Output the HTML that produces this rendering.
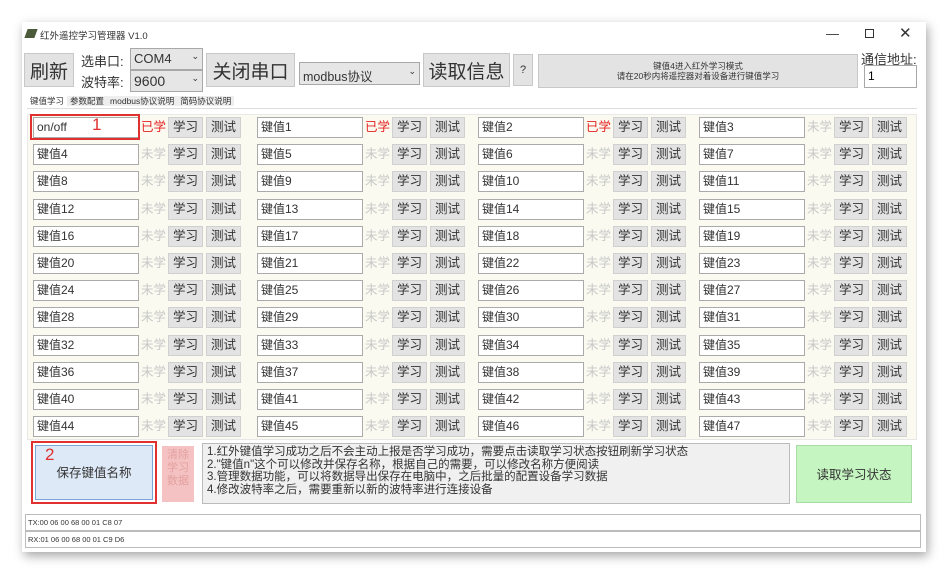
<!DOCTYPE html><html><head><meta charset="utf-8"><style>
body{margin:0;width:950px;height:570px;background:#fff;position:relative;overflow:hidden;font-family:"Liberation Sans","Noto Sans CJK SC",sans-serif;}
.a{position:absolute;box-sizing:border-box}
.win{left:22px;top:22px;width:904px;height:530px;background:#fff;box-shadow:2px 4px 10px rgba(0,0,0,.35)}
.btn{background:#e3e3e3;border:1px solid #c8c8c8;color:#333;display:flex;align-items:center;justify-content:center}
.box{background:#fff;border:1px solid #a8a8a8}
.row{position:absolute;left:33px;height:21px;display:flex;font-size:12px}
.g{display:flex;width:221px}
.g:first-child{width:224px}
.g .i{width:106px;height:21px;box-sizing:border-box;border:1px solid #aaa;background:#fff;padding:0 3px;line-height:19px;color:#333}
.g .s{width:29px;text-align:center;line-height:21px;color:#c8c8c8;font-size:12.5px}
.g .s.r{color:#e62020}
.g .b{width:35px;height:21px;box-sizing:border-box;background:#e3e3e3;border:1px solid #d0d0d0;margin-right:3px;text-align:center;line-height:19px;color:#333;font-size:12.5px}
.g.last{width:auto}
</style></head><body>
<div class="a win"></div>
<div class="a" style="left:26px;top:29px;width:10px;height:9px;background:#4a5a3a;transform:skew(-20deg)"></div>
<div class="a" style="left:40px;top:28px;font-size:9.5px;color:#333">红外遥控学习管理器 V1.0</div>
<div class="a" style="left:826px;top:26px;font-size:13px;color:#333">—</div>
<div class="a" style="left:865px;top:29px;width:9px;height:9px;border:1px solid #333"></div>
<div class="a" style="left:899px;top:24px;font-size:15px;color:#333">✕</div>

<div class="a btn" style="left:24px;top:53px;width:50px;height:34px;font-size:19px">刷新</div>
<div class="a" style="left:81px;top:51px;font-size:13px;color:#333;line-height:21px">选串口:<br>波特率:</div>
<div class="a box" style="left:130px;top:48px;width:73px;height:22px;background:#e6e6e6;font-size:13px;padding:2px 3px;color:#333">COM4<span style="float:right;font-size:9px">⌄</span></div>
<div class="a box" style="left:130px;top:70px;width:73px;height:22px;background:#e6e6e6;font-size:14px;padding:2px 3px;color:#333">9600<span style="float:right;font-size:9px">⌄</span></div>
<div class="a btn" style="left:206px;top:53px;width:89px;height:34px;font-size:19px">关闭串口</div>
<div class="a box" style="left:299px;top:62px;width:121px;height:23px;background:#e6e6e6;font-size:12.5px;padding:3px 3px;color:#333">modbus协议<span style="float:right;font-size:9px">⌄</span></div>
<div class="a btn" style="left:423px;top:53px;width:87px;height:34px;font-size:19px">读取信息</div>
<div class="a btn" style="left:513px;top:54px;width:20px;height:32px;font-size:11px">?</div>
<div class="a btn" style="left:538px;top:54px;width:320px;height:34px;font-size:8.5px;line-height:10px;text-align:center;flex-direction:column">键值4进入红外学习模式<br>请在20秒内将遥控器对着设备进行键值学习</div>
<div class="a" style="left:861px;top:49px;font-size:13px;color:#333">通信地址:</div>
<div class="a box" style="left:864px;top:65px;width:53px;height:23px;font-size:12px;padding:3px 3px">1</div>

<div class="a" style="left:27px;top:94px;font-size:8.5px;color:#333;height:15px;line-height:15px;width:890px;border-bottom:1px solid #ddd">
<span style="background:#fff;padding:0 3px">键值学习</span><span style="background:#eee;padding:0 3px">参数配置</span><span style="background:#eee;padding:0 3px">modbus协议说明</span><span style="background:#eee;padding:0 3px">简码协议说明</span></div>
<div class="a" style="left:27px;top:114px;width:890px;height:326px;background:#fafaf0;border:1px solid #e8e8e8"></div>

<div class="row" style="top:117px"><div class="g"><div class="i">on/off</div><div class="s r">已学</div><div class="b">学习</div><div class="b">测试</div></div><div class="g"><div class="i">键值1</div><div class="s r">已学</div><div class="b">学习</div><div class="b">测试</div></div><div class="g"><div class="i">键值2</div><div class="s r">已学</div><div class="b">学习</div><div class="b">测试</div></div><div class="g last"><div class="i">键值3</div><div class="s">未学</div><div class="b">学习</div><div class="b">测试</div></div></div>
<div class="row" style="top:144px"><div class="g"><div class="i">键值4</div><div class="s">未学</div><div class="b">学习</div><div class="b">测试</div></div><div class="g"><div class="i">键值5</div><div class="s">未学</div><div class="b">学习</div><div class="b">测试</div></div><div class="g"><div class="i">键值6</div><div class="s">未学</div><div class="b">学习</div><div class="b">测试</div></div><div class="g last"><div class="i">键值7</div><div class="s">未学</div><div class="b">学习</div><div class="b">测试</div></div></div>
<div class="row" style="top:171px"><div class="g"><div class="i">键值8</div><div class="s">未学</div><div class="b">学习</div><div class="b">测试</div></div><div class="g"><div class="i">键值9</div><div class="s">未学</div><div class="b">学习</div><div class="b">测试</div></div><div class="g"><div class="i">键值10</div><div class="s">未学</div><div class="b">学习</div><div class="b">测试</div></div><div class="g last"><div class="i">键值11</div><div class="s">未学</div><div class="b">学习</div><div class="b">测试</div></div></div>
<div class="row" style="top:199px"><div class="g"><div class="i">键值12</div><div class="s">未学</div><div class="b">学习</div><div class="b">测试</div></div><div class="g"><div class="i">键值13</div><div class="s">未学</div><div class="b">学习</div><div class="b">测试</div></div><div class="g"><div class="i">键值14</div><div class="s">未学</div><div class="b">学习</div><div class="b">测试</div></div><div class="g last"><div class="i">键值15</div><div class="s">未学</div><div class="b">学习</div><div class="b">测试</div></div></div>
<div class="row" style="top:226px"><div class="g"><div class="i">键值16</div><div class="s">未学</div><div class="b">学习</div><div class="b">测试</div></div><div class="g"><div class="i">键值17</div><div class="s">未学</div><div class="b">学习</div><div class="b">测试</div></div><div class="g"><div class="i">键值18</div><div class="s">未学</div><div class="b">学习</div><div class="b">测试</div></div><div class="g last"><div class="i">键值19</div><div class="s">未学</div><div class="b">学习</div><div class="b">测试</div></div></div>
<div class="row" style="top:253px"><div class="g"><div class="i">键值20</div><div class="s">未学</div><div class="b">学习</div><div class="b">测试</div></div><div class="g"><div class="i">键值21</div><div class="s">未学</div><div class="b">学习</div><div class="b">测试</div></div><div class="g"><div class="i">键值22</div><div class="s">未学</div><div class="b">学习</div><div class="b">测试</div></div><div class="g last"><div class="i">键值23</div><div class="s">未学</div><div class="b">学习</div><div class="b">测试</div></div></div>
<div class="row" style="top:280px"><div class="g"><div class="i">键值24</div><div class="s">未学</div><div class="b">学习</div><div class="b">测试</div></div><div class="g"><div class="i">键值25</div><div class="s">未学</div><div class="b">学习</div><div class="b">测试</div></div><div class="g"><div class="i">键值26</div><div class="s">未学</div><div class="b">学习</div><div class="b">测试</div></div><div class="g last"><div class="i">键值27</div><div class="s">未学</div><div class="b">学习</div><div class="b">测试</div></div></div>
<div class="row" style="top:307px"><div class="g"><div class="i">键值28</div><div class="s">未学</div><div class="b">学习</div><div class="b">测试</div></div><div class="g"><div class="i">键值29</div><div class="s">未学</div><div class="b">学习</div><div class="b">测试</div></div><div class="g"><div class="i">键值30</div><div class="s">未学</div><div class="b">学习</div><div class="b">测试</div></div><div class="g last"><div class="i">键值31</div><div class="s">未学</div><div class="b">学习</div><div class="b">测试</div></div></div>
<div class="row" style="top:335px"><div class="g"><div class="i">键值32</div><div class="s">未学</div><div class="b">学习</div><div class="b">测试</div></div><div class="g"><div class="i">键值33</div><div class="s">未学</div><div class="b">学习</div><div class="b">测试</div></div><div class="g"><div class="i">键值34</div><div class="s">未学</div><div class="b">学习</div><div class="b">测试</div></div><div class="g last"><div class="i">键值35</div><div class="s">未学</div><div class="b">学习</div><div class="b">测试</div></div></div>
<div class="row" style="top:362px"><div class="g"><div class="i">键值36</div><div class="s">未学</div><div class="b">学习</div><div class="b">测试</div></div><div class="g"><div class="i">键值37</div><div class="s">未学</div><div class="b">学习</div><div class="b">测试</div></div><div class="g"><div class="i">键值38</div><div class="s">未学</div><div class="b">学习</div><div class="b">测试</div></div><div class="g last"><div class="i">键值39</div><div class="s">未学</div><div class="b">学习</div><div class="b">测试</div></div></div>
<div class="row" style="top:389px"><div class="g"><div class="i">键值40</div><div class="s">未学</div><div class="b">学习</div><div class="b">测试</div></div><div class="g"><div class="i">键值41</div><div class="s">未学</div><div class="b">学习</div><div class="b">测试</div></div><div class="g"><div class="i">键值42</div><div class="s">未学</div><div class="b">学习</div><div class="b">测试</div></div><div class="g last"><div class="i">键值43</div><div class="s">未学</div><div class="b">学习</div><div class="b">测试</div></div></div>
<div class="row" style="top:416px"><div class="g"><div class="i">键值44</div><div class="s">未学</div><div class="b">学习</div><div class="b">测试</div></div><div class="g"><div class="i">键值45</div><div class="s">未学</div><div class="b">学习</div><div class="b">测试</div></div><div class="g"><div class="i">键值46</div><div class="s">未学</div><div class="b">学习</div><div class="b">测试</div></div><div class="g last"><div class="i">键值47</div><div class="s">未学</div><div class="b">学习</div><div class="b">测试</div></div></div>

<div class="a" style="left:30px;top:114px;width:110px;height:26px;border:2px solid #e03030"></div>
<div class="a" style="left:92px;top:115px;font-size:17px;color:#e03030">1</div>

<div class="a" style="left:35px;top:445px;width:118px;height:55px;background:#dde9f6;border:1px solid #7aa7d8;font-size:12.5px;color:#333;text-align:center;line-height:55px">保存键值名称</div>
<div class="a" style="left:31px;top:441px;width:126px;height:63px;border:2px solid #e03030"></div>
<div class="a" style="left:45px;top:445px;font-size:17px;color:#e03030">2</div>
<div class="a" style="left:162px;top:446px;width:32px;height:56px;background:#f4c2c2;color:#e4a0a0;font-size:11px;line-height:13px;text-align:center;padding-top:3px">清除<br>学习<br>数据</div>
<div class="a" style="left:202px;top:443px;width:588px;height:61px;background:#f0f0f0;border:1px solid #bbb;font-size:11.5px;line-height:12.5px;color:#333;padding:2px 4px">1.红外键值学习成功之后不会主动上报是否学习成功，需要点击读取学习状态按钮刷新学习状态<br>2."键值n"这个可以修改并保存名称，根据自己的需要，可以修改名称方便阅读<br>3.管理数据功能，可以将数据导出保存在电脑中，之后批量的配置设备学习数据<br>4.修改波特率之后，需要重新以新的波特率进行连接设备</div>
<div class="a" style="left:796px;top:445px;width:116px;height:58px;background:#c5f5c0;border:1px solid #a8dca2;color:#333;font-size:12.5px;text-align:center;line-height:58px">读取学习状态</div>
<div class="a box" style="left:25px;top:514px;width:896px;height:17px;font-size:7.5px;padding:3px 2px;color:#333;border-color:#bbb">TX:00 06 00 68 00 01 C8 07</div>
<div class="a box" style="left:25px;top:531px;width:896px;height:17px;font-size:7.5px;padding:3px 2px;color:#333;border-color:#bbb">RX:01 06 00 68 00 01 C9 D6</div>
</body></html>
